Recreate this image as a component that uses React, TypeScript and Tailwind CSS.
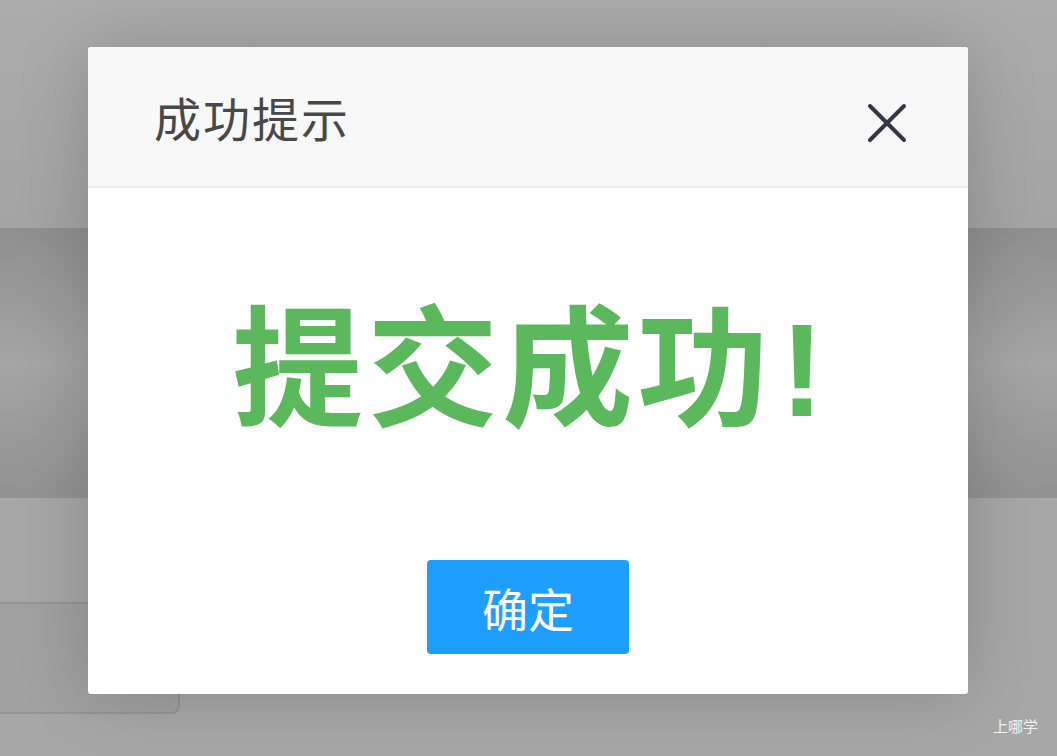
import React from "react";

const cjk = { fontFamily: '"Noto Sans CJK SC", "Noto Sans", sans-serif' };
const latin = { fontFamily: '"Liberation Sans", Arial, sans-serif' };

function CloseIcon() {
  return (
    <svg width="40" height="40" viewBox="0 0 40 40" fill="none">
      <path d="M3 3L37 37M37 3L3 37" stroke="#363645" strokeWidth="4" strokeLinecap="round" />
    </svg>
  );
}

export default function App() {
  return (
    <div className="relative h-[756px] w-[1057px] overflow-hidden bg-[#a6a6a6]" style={cjk}>
      {/* page behind the mask */}
      <div className="flex h-full flex-col">
        <div className="h-[228px] bg-gradient-to-b from-[#acacac] to-[#a4a4a4]" />
        <div className="h-[270px] bg-gradient-to-b from-[#8f8f8f] via-[#a5a5a5] to-[#929292]" />
        <div className="flex flex-1 flex-col bg-[#a7a7a7]">
          <div className="h-[104px]" />
          <div className="h-[112px] w-[180px] rounded-br-[8px] border-t-2 border-r-2 border-b-2 border-[#939393] bg-[#a1a1a1]" />
        </div>
      </div>

      {/* dialog */}
      <div className="absolute left-[88px] top-[47px] flex h-[647px] w-[880px] flex-col overflow-hidden rounded-[3px] bg-white shadow-[0_0_70px_rgba(0,0,0,0.18)]">
        <div className="flex h-[141px] shrink-0 items-center justify-between border-b-2 border-[#ebebeb] bg-[#f8f8f8] pl-[66px] pr-[61px]">
          <span className="text-[47px] leading-none tracking-[2px] text-[#484848]">成功提示</span>
          <span className="mt-[12px]">
            <CloseIcon />
          </span>
        </div>
        <div className="flex flex-1 flex-col items-center pt-[106px]">
          <div className="flex h-[131px] items-baseline overflow-visible text-[131px] font-bold leading-[131px] text-[#5cb85c]">
            <span className="tracking-[4px]">提交成功</span>
            <span className="ml-[8px]" style={latin}>!</span>
          </div>
          <button className="mt-[135px] flex h-[94px] w-[202px] items-center justify-center rounded-[4px] bg-[#1e9fff] text-[46px] leading-none text-white">
            确定
          </button>
        </div>
      </div>

      <div className="absolute left-[993px] top-[718px] text-[15px] leading-none text-[#f2f2f2]">上哪学</div>
    </div>
  );
}
